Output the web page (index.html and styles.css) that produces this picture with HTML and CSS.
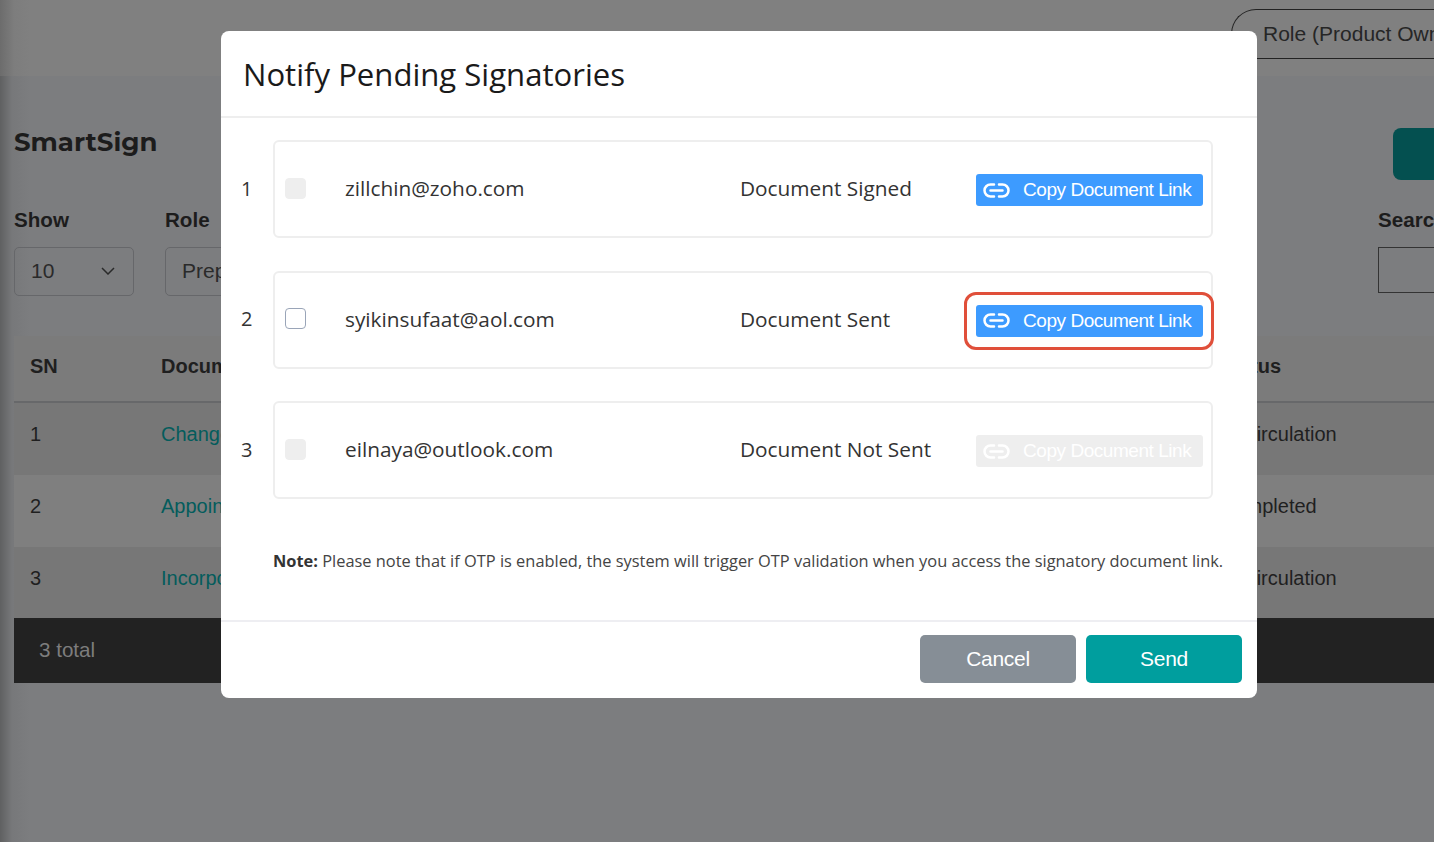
FILE: index.html
```html
<!DOCTYPE html>
<html lang="en">
<head>
  <meta charset="UTF-8">
  <title>SmartSign</title>
  <link rel="stylesheet" href="styles.css">
</head>
<body>
  <div class="page">
    <div class="top-bar">
      <div class="role-pill">Role (Product Owner)</div>
    </div>
    <div class="content">
      <div class="title-row">
        <div class="page-title">SmartSign</div>
        <div class="new-button"></div>
      </div>
      <div class="filters">
        <div class="filter filter-show">
          <div class="filter-label">Show</div>
          <div class="select">
            <span>10</span>
            <svg width="14" height="8" viewBox="0 0 14 8"><path d="M1 1l6 6 6-6" fill="none" stroke="#2a2a2a" stroke-width="1.5"/></svg>
          </div>
        </div>
        <div class="filter filter-role">
          <div class="filter-label">Role</div>
          <div class="select"><span>Preparer</span></div>
        </div>
        <div class="filter filter-search">
          <div class="filter-label">Search</div>
          <div class="search-box"></div>
        </div>
      </div>
      <div class="table">
        <div class="row row-head">
          <div class="cell-sn">SN</div>
          <div class="cell-doc">Document</div>
          <div class="cell-status">Status</div>
        </div>
        <div class="row">
          <div class="cell-sn">1</div>
          <div class="cell-doc doc-link">Change of Address</div>
          <div class="cell-status">In Circulation</div>
        </div>
        <div class="row row-alt">
          <div class="cell-sn">2</div>
          <div class="cell-doc doc-link">Appointment of Director</div>
          <div class="cell-status">Completed</div>
        </div>
        <div class="row">
          <div class="cell-sn">3</div>
          <div class="cell-doc doc-link">Incorporation Form</div>
          <div class="cell-status">In Circulation</div>
        </div>
        <div class="table-footer">3 total</div>
      </div>
    </div>
  </div>

  <div class="modal">
    <div class="modal-header">Notify Pending Signatories</div>
    <div class="modal-body">
      <div class="signer">
        <div class="signer-num">1</div>
        <div class="signer-card">
          <span class="check check-disabled"></span>
          <div class="signer-email">zillchin@zoho.com</div>
          <div class="signer-status">Document Signed</div>
          <div class="copy-link">
            <svg class="link-icon" width="27" height="15" viewBox="0 0 27 15"><path d="M11 1.5H7.5a6 6 0 0 0 0 12H11M16 1.5h3.5a6 6 0 0 1 0 12H16M7.5 7.5h12" fill="none" stroke="currentColor" stroke-width="2.5" stroke-linecap="round"/></svg>
            <span>Copy Document Link</span>
          </div>
        </div>
      </div>
      <div class="signer">
        <div class="signer-num">2</div>
        <div class="signer-card">
          <span class="check"></span>
          <div class="signer-email">syikinsufaat@aol.com</div>
          <div class="signer-status">Document Sent</div>
          <div class="copy-link highlighted">
            <svg class="link-icon" width="27" height="15" viewBox="0 0 27 15"><path d="M11 1.5H7.5a6 6 0 0 0 0 12H11M16 1.5h3.5a6 6 0 0 1 0 12H16M7.5 7.5h12" fill="none" stroke="currentColor" stroke-width="2.5" stroke-linecap="round"/></svg>
            <span>Copy Document Link</span>
          </div>
        </div>
      </div>
      <div class="signer">
        <div class="signer-num">3</div>
        <div class="signer-card">
          <span class="check check-disabled"></span>
          <div class="signer-email">eilnaya@outlook.com</div>
          <div class="signer-status">Document Not Sent</div>
          <div class="copy-link copy-disabled">
            <svg class="link-icon" width="27" height="15" viewBox="0 0 27 15"><path d="M11 1.5H7.5a6 6 0 0 0 0 12H11M16 1.5h3.5a6 6 0 0 1 0 12H16M7.5 7.5h12" fill="none" stroke="currentColor" stroke-width="2.5" stroke-linecap="round"/></svg>
            <span>Copy Document Link</span>
          </div>
        </div>
      </div>
      <div class="note"><b>Note:</b> Please note that if OTP is enabled, the system will trigger OTP validation when you access the signatory document link.</div>
    </div>
    <div class="modal-footer">
      <div class="btn btn-cancel">Cancel</div>
      <div class="btn btn-send">Send</div>
    </div>
  </div>
</body>
</html>
```

FILE: styles.css
```css
html, body {
  margin: 0;
  height: 100%;
  overflow: hidden;
}

body {
  font-family: 'Liberation Sans', Arial, sans-serif;
  background-color: #7c7d7f;
  color: #1c1c1c;
}

.page {
  height: 842px;
  overflow: hidden;
  background: linear-gradient(to right, #5f6061 0, #77787a 12px, #7c7d7f 30px);
}

.top-bar {
  height: 76px;
  box-sizing: border-box;
  padding: 9px 0 0 1231px;
  background: linear-gradient(to right, #6c6c6c 0, #7d7d7d 14px, #808080 30px);
}

.role-pill {
  width: 300px;
  height: 50px;
  box-sizing: border-box;
  padding: 12px 0 0 31px;
  border: 1px solid #222;
  border-right: 0;
  border-radius: 25px 0 0 0;
  font-size: 21px;
  white-space: nowrap;
  color: #262626;
}

.content {
  padding-left: 14px;
  width: 1500px;
}

.title-row {
  height: 52px;
  margin-top: 52px;
  position: relative;
}

.page-title {
  font-family: 'Montserrat', 'Inter', sans-serif;
  font-size: 26px;
  font-weight: 700;
  line-height: 28px;
  color: #1c1c1c;
}

.new-button {
  position: absolute;
  left: 1379px;
  top: 0;
  width: 120px;
  height: 52px;
  border-radius: 8px;
  background-color: #045050;
}

.filters {
  display: flex;
  margin-top: 28px;
}

.filter-label {
  font-size: 20.6px;
  font-weight: 700;
  line-height: 23px;
  margin-bottom: 16px;
  color: #1c1c1c;
}

.filter-show {
  width: 151px;
}

.filter-role {
  width: 1213px;
}

.select {
  width: 120px;
  height: 49px;
  box-sizing: border-box;
  padding: 0 18px 2px 16px;
  display: flex;
  align-items: center;
  justify-content: space-between;
  border: 1px solid #66676a;
  border-radius: 5px;
  font-size: 21px;
  color: #2a2a2a;
}

.filter-role .select {
  width: 200px;
}

.search-box {
  width: 120px;
  height: 44px;
  border: 1px solid #333;
}

.table {
  margin-top: 40px;
}

.row {
  display: flex;
  align-items: center;
  height: 72px;
  box-sizing: border-box;
  padding-bottom: 9px;
  font-size: 20px;
  color: #1f1f1f;
  background-color: #777777;
}

.row-head {
  height: 67px;
  padding-bottom: 5px;
  font-weight: 700;
  background-color: #7b7b7b;
  border-bottom: 2px solid #67686a;
}

.row-alt {
  background-color: #7f7f7f;
}

.cell-sn {
  width: 147px;
  padding-left: 16px;
  box-sizing: border-box;
}

.cell-doc {
  width: 1059px;
}

.doc-link {
  color: #045c5c;
}

.table-footer {
  height: 65px;
  line-height: 64px;
  margin-top: -1px;
  padding-left: 25px;
  background-color: #222;
  color: #7d7d7d;
  font-size: 20.6px;
}

/* modal sits over the dimmed page */
.modal {
  position: absolute;
  left: 221px;
  top: 31px;
  width: 1036px;
  height: 667px;
  display: flex;
  flex-direction: column;
  background-color: #fff;
  border-radius: 8px;
  font-family: 'Open Sans', sans-serif;
}

.modal-header {
  height: 87px;
  box-sizing: border-box;
  padding: 21px 0 0 22px;
  border-bottom: 2px solid #eeeeee;
  font-size: 31.1px;
  line-height: 44px;
  color: #1a1a1a;
}

.modal-body {
  flex: 1;
  padding: 22px 0 0 20px;
}

.signer {
  display: flex;
  align-items: center;
  margin-bottom: 32.5px;
}

.signer-num {
  width: 32px;
  font-size: 20px;
  color: #333;
  margin-top: -2px;
}

.signer-card {
  width: 940px;
  height: 98px;
  box-sizing: border-box;
  display: flex;
  align-items: center;
  border: 2px solid #eeeeee;
  border-radius: 6px;
  padding-left: 10px;
}

.check {
  width: 21px;
  height: 21px;
  box-sizing: border-box;
  border: 1px solid #9aa5b8;
  border-radius: 4px;
  margin-top: -2px;
}

.check-disabled {
  background-color: #eeeeee;
  border-color: #eeeeee;
}

.signer-email {
  width: 395px;
  margin-left: 39px;
  margin-top: -2px;
  font-size: 20.8px;
  color: #333;
}

.signer-status {
  width: 236px;
  margin-top: -2px;
  font-size: 20.8px;
  color: #333;
}

.copy-link {
  width: 227px;
  height: 32px;
  box-sizing: border-box;
  display: flex;
  align-items: center;
  gap: 13px;
  padding-left: 7px;
  margin-top: 2px;
  border-radius: 3px;
  background-color: #3d9bff;
  color: #fff;
  font-family: 'Liberation Sans', Arial, sans-serif;
  font-size: 19px;
  letter-spacing: -0.45px;
  position: relative;
}

.copy-disabled {
  background-color: #eeeeee;
}

/* red annotation ring */
.highlighted::after {
  content: "";
  position: absolute;
  left: -12px;
  top: -13px;
  width: 244px;
  height: 52px;
  border: 3px solid #e04f3a;
  border-radius: 12px;
}

.note {
  margin-top: 50px;
  font-size: 16.4px;
  color: #444;
  white-space: nowrap;
  padding-left: 32px;
}

.note b {
  color: #333;
}

.modal-footer {
  height: 78px;
  box-sizing: border-box;
  display: flex;
  justify-content: flex-end;
  gap: 10px;
  padding: 13px 15px 0 0;
  border-top: 2px solid #eeeef2;
}

.btn {
  width: 156px;
  height: 48px;
  line-height: 48px;
  text-align: center;
  border-radius: 5px;
  font-family: 'Liberation Sans', Arial, sans-serif;
  font-size: 21px;
  letter-spacing: -0.3px;
  color: #fff;
}

.btn-cancel {
  background-color: #868e96;
}

.btn-send {
  background-color: #009e9e;
}
```
